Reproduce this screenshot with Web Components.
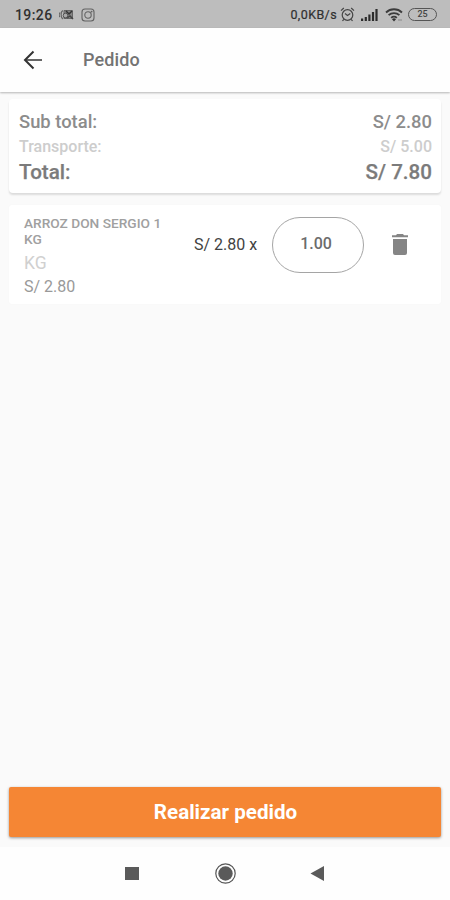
<!DOCTYPE html>
<html lang="es">
<head>
<meta charset="utf-8">
<title>Pedido</title>
<style>
html,body{margin:0;height:100%}
body{font-family:Roboto,"Liberation Sans",sans-serif;background:#fafafa;color:#555;overflow:hidden}
</style>
</head>
<body>
<order-screen></order-screen>
<script>
function define(name, markup) {
  const template = document.createElement('template');
  template.innerHTML = markup;
  customElements.define(name, class extends HTMLElement {
    constructor() {
      super();
      this.attachShadow({mode: 'open'}).append(template.content.cloneNode(true));
    }
  });
}

define('status-bar', `
<style>
:host{display:flex;box-sizing:border-box;height:28px;background:#bdbdbd;color:#303030;align-items:center;padding:1px 13px 0 15px}
.time{font-size:14px;font-weight:500;letter-spacing:.4px;width:44px}
.rate{font-size:12.5px;font-weight:400;-webkit-text-stroke:.2px #303030;letter-spacing:.4px;margin-left:auto;white-space:nowrap}
svg{display:block;flex:none}
.battery{box-sizing:border-box;width:29px;height:13px;border:1.3px solid #555;border-radius:7px;font-size:9px;line-height:11px;text-align:center;font-weight:500;color:#444;margin-left:6px}
</style>
<span class="time">19:26</span>
<svg width="15" height="14" viewBox="0 0 15 14" fill="none" stroke="#666"><path d="M4 2.5C1.500 3.500 1.500 9.500 4 11M1 4.500C0 6 0 8 1 9" stroke-width="1.200"/><path d="M5 2.500h8.500V10.500H5z" fill="#858585"/><path d="M7 3l3 3 3-3" stroke="#333" stroke-width="1.500"/><path d="M8 10l3-2 3 3" stroke="#444" stroke-width="1.500"/><circle cx="6.500" cy="7.500" r="2.300" fill="#aaa" stroke="#555"/></svg>
<svg width="14" height="14" viewBox="0 0 14 14" fill="none" stroke="#626262" stroke-width="1.1" style="margin-left:7px"><rect x="1" y="1" width="12" height="12" rx="3"/><circle cx="7" cy="7" r="3.2"/><circle cx="10.6" cy="3.6" r=".4"/></svg>
<span class="rate">0,0KB/s</span>
<svg width="15" height="15" viewBox="0 0 15 15" fill="none" stroke="#444" stroke-width="1.2" style="margin-left:3px"><circle cx="7.5" cy="8" r="5.3"/><path d="M5 6.5l2.5 2 2.8-2M1 3.6L3.8 1M14 3.6L11.2 1M3.8 12.3L2.5 14M11.2 12.3L12.5 14"/></svg>
<svg width="17" height="12" viewBox="0 0 17 12" fill="#2c2c2c" style="margin-left:6px"><path d="M0 9.5h2.2V12H0zM3.7 8h2.2v4H3.7zM7.3 5.5h2.2V12H7.3zM10.9 3h2.2v9h-2.2zM14.4 0h2.2v12h-2.2z"/></svg>
<svg width="18" height="14" viewBox="0 0 18 14" fill="none" stroke="#3c3c3c" stroke-width="1.8" style="margin-left:7px;margin-right:-1px"><path d="M1 4.500a11.5 11.5 0 0 1 16 0M3.6 7.2a7.8 7.8 0 0 1 10.8 0M6.2 9.800a4 4 0 0 1 5.6 0"/><path d="M7 11.2L9 13.5l2-2.3a3 3 0 0 0-4 0z" fill="#333" stroke="none"/><path d="M14 11v2M16 11v2" stroke="#888" stroke-width="1"/></svg>
<span class="battery">25</span>`);

define('app-header', `
<style>
:host{display:flex;box-sizing:border-box;height:64px;align-items:center;background:#fefefe;padding:0 23px;box-shadow:0 1px 2px rgba(0,0,0,.28);position:relative}
svg{display:block}
h1{margin:0 0 0 40px;font-size:18px;font-weight:500;line-height:24px;letter-spacing:.1px;color:#737373}
</style>
<svg width="20" height="20" viewBox="0 0 20 20" fill="none" stroke-width="2"><path d="M2 10h17" stroke="#666"/><path d="M10.5 1.5L2 10l8.5 8.5" stroke="#333"/></svg>
<h1><slot></slot></h1>`);

define('total-row', `
<style>
:host{display:flex;justify-content:space-between;align-items:center;font-weight:500;white-space:nowrap}
</style>
<slot name="label"></slot><slot name="amount"></slot>`);

define('order-totals', `
<style>
:host{display:flex;flex-direction:column;box-sizing:border-box;height:94px;margin:7px 9px 0;padding:9px 9px 0 10px;background:#fff;border-radius:4px;box-shadow:0 2px 2px rgba(0,0,0,.12)}
.sub{height:26px;font-size:18.400px;color:#8c8c8c}
.ship{height:24px;font-size:16px;color:#cdcdcd}
.total{height:28px;font-size:20.600px;color:#7b7b7b;-webkit-text-stroke:.25px #7b7b7b}
</style>
<total-row class="sub"><span slot="label">Sub total:</span><span slot="amount">S/ 2.80</span></total-row>
<total-row class="ship"><span slot="label">Transporte:</span><span slot="amount">S/ 5.00</span></total-row>
<total-row class="total"><span slot="label">Total:</span><span slot="amount">S/ 7.80</span></total-row>`);

define('order-item', `
<style>
:host{display:flex;box-sizing:border-box;height:99px;margin:12px 9px 0;padding:0 0 0 15px;background:#fff;border-radius:3px;box-shadow:0 0 2px rgba(0,0,0,.025)}
.info{width:170px;padding-top:10px;color:#a0a0a0;white-space:nowrap}
.name{font-size:13.700px;line-height:16px;font-weight:500}
.unit{font-size:17.500px;line-height:22px;color:#d0d0d0;margin-top:5px}
.price{font-size:16px;line-height:24px;color:#999;margin-top:1px}
.each{width:78px;font-size:16px;line-height:22px;padding-top:29px;color:#424242;white-space:nowrap}
.qty{box-sizing:border-box;width:92px;height:56px;margin:12px 0 0 -.5px;border:1px solid #a5a5a5;border-radius:28px;text-align:center;font-size:16px;font-weight:500;line-height:52px;padding-right:3px;color:#6c6c6c}
svg{display:block;margin:29px 0 0 28.500px}
</style>
<div class="info"><div class="name">ARROZ DON SERGIO 1<br>KG</div><div class="unit">KG</div><div class="price">S/ 2.80</div></div>
<div class="each">S/ 2.80 x</div>
<div class="qty">1.00</div>
<svg width="16" height="21" viewBox="0 0 16 21" fill="#858585"><path d="M0 1.2h4L5 0h6l1 1.2h4v2H0zM1 5h14v14a2 2 0 0 1-2 2H3a2 2 0 0 1-2-2z"/></svg>`);

define('primary-button', `
<style>
:host{display:block;margin:auto 9px 10px}
button{display:block;width:100%;height:50px;border:0;padding:0 0 0 1px;border-radius:2px;background:#f58634;color:#fff;font:700 20.600px/50px Roboto,"Liberation Sans",sans-serif;box-shadow:0 1px 3px rgba(0,0,0,.4)}
</style>
<button><slot></slot></button>`);

define('nav-bar', `
<style>
:host{display:flex;justify-content:center;box-sizing:border-box;height:53px;background:#fefefe;padding-top:15px}
svg{display:block}
</style>
<svg width="202" height="24" viewBox="0 0 202 24"><path d="M1 5h14v13H1z" fill="#5a5a5a"/><circle cx="101.500" cy="11.500" r="9.700" fill="none" stroke="#555" stroke-width="1.200"/><circle cx="101.500" cy="11.500" r="7.200" fill="#5a5a5a"/><path d="M186.500 11.500L200 4v15z" fill="#5a5a5a"/></svg>`);

define('order-screen', `
<style>:host{display:flex;flex-direction:column;height:900px;width:450px}</style>
<status-bar></status-bar>
<app-header>Pedido</app-header>
<order-totals></order-totals>
<order-item></order-item>
<primary-button>Realizar pedido</primary-button>
<nav-bar></nav-bar>`);
</script>
</body>
</html>
